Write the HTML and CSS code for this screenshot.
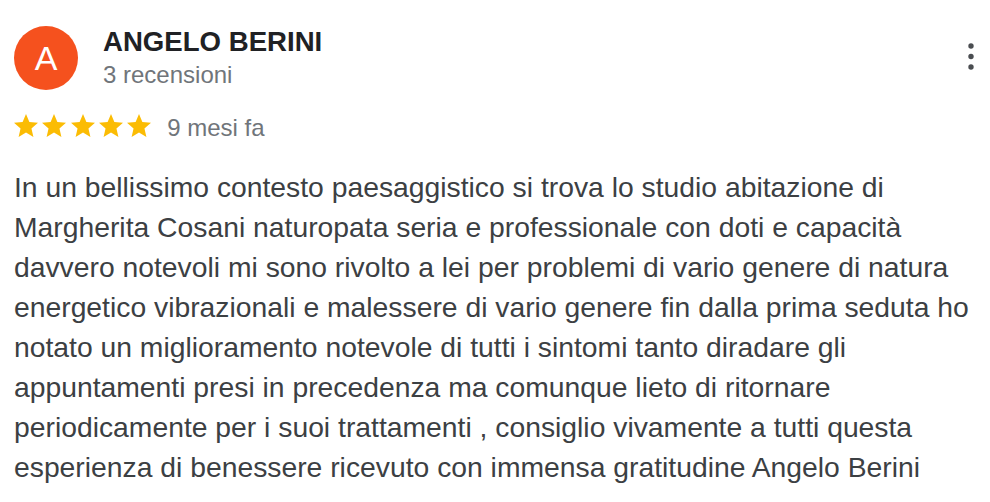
FILE: index.html
```html
<!DOCTYPE html>
<html lang="it">
<head>
<meta charset="utf-8">
<title>Recensione</title>
<link rel="stylesheet" href="styles.css">
</head>
<body>
<div class="review">
  <div class="header">
    <div class="avatar">A</div>
    <div class="info">
      <div class="name">ANGELO BERINI</div>
      <div class="meta">3 recensioni</div>
    </div>
    <button class="menu" aria-label="Altre opzioni">
      <svg width="10" height="30" viewBox="0 0 10 30"><circle cx="5" cy="5" r="2.7"/><circle cx="5" cy="15.5" r="2.7"/><circle cx="5" cy="26" r="2.7"/></svg>
    </button>
  </div>
  <div class="rating">
    <div class="stars">
      <svg class="star" viewBox="2 2 20 19"><path d="M12 17.27L18.18 21l-1.64-7.03L22 9.24l-7.19-.61L12 2 9.19 8.63 2 9.24l5.46 4.73L5.82 21z"/></svg>
      <svg class="star" viewBox="2 2 20 19"><path d="M12 17.27L18.18 21l-1.64-7.03L22 9.24l-7.19-.61L12 2 9.19 8.63 2 9.24l5.46 4.73L5.82 21z"/></svg>
      <svg class="star" viewBox="2 2 20 19"><path d="M12 17.27L18.18 21l-1.64-7.03L22 9.24l-7.19-.61L12 2 9.19 8.63 2 9.24l5.46 4.73L5.82 21z"/></svg>
      <svg class="star" viewBox="2 2 20 19"><path d="M12 17.27L18.18 21l-1.64-7.03L22 9.24l-7.19-.61L12 2 9.19 8.63 2 9.24l5.46 4.73L5.82 21z"/></svg>
      <svg class="star" viewBox="2 2 20 19"><path d="M12 17.27L18.18 21l-1.64-7.03L22 9.24l-7.19-.61L12 2 9.19 8.63 2 9.24l5.46 4.73L5.82 21z"/></svg>
    </div>
    <span class="date">9 mesi fa</span>
  </div>
  <p class="text">In un bellissimo contesto paesaggistico si trova lo studio abitazione di Margherita Cosani naturopata seria e professionale con doti e capacità davvero notevoli mi sono rivolto a lei per problemi di vario genere di natura energetico vibrazionali e malessere di vario genere fin dalla prima seduta ho notato un miglioramento notevole di tutti i sintomi tanto diradare gli appuntamenti presi in precedenza ma comunque lieto di ritornare periodicamente per i suoi trattamenti , consiglio vivamente a tutti questa esperienza di benessere ricevuto con immensa gratitudine Angelo Berini</p>
</div>
</body>
</html>
```

FILE: styles.css
```css
html, body {
  margin: 0;
  padding: 0;
  background: #ffffff;
}

body {
  font-family: "Liberation Sans", Arial, Helvetica, sans-serif;
}

.review {
  padding: 26px 14px 0 14px;
}

.header {
  display: flex;
  align-items: flex-start;
}

.avatar {
  width: 64px;
  height: 64px;
  border-radius: 50%;
  background: #f5511e;
  color: #ffffff;
  font-size: 34px;
  line-height: 64px;
  text-align: center;
  flex: 0 0 auto;
}

.info {
  margin-left: 25px;
  flex: 1 1 auto;
}

.name {
  font-size: 27.6px;
  font-weight: bold;
  line-height: 32px;
  color: #202124;
}

.meta {
  font-size: 24px;
  line-height: 34px;
  color: #70757a;
}

.menu {
  margin: 15px 0 0 0;
  padding: 0;
  border: 0;
  background: none;
  width: 10px;
  height: 30px;
  display: flex;
}

.menu svg {
  fill: #4a4d51;
}

.rating {
  display: flex;
  align-items: flex-start;
  margin-top: 22px;
  height: 28px;
}

.stars {
  display: flex;
  gap: 4.3px;
  margin-right: 16px;
}

.star {
  width: 24px;
  height: 23px;
  fill: #fbbc04;
}

.date {
  font-size: 24px;
  line-height: 28px;
  color: #70757a;
}

.text {
  margin: 25px 0 0 0;
  font-size: 28.3px;
  line-height: 40px;
  color: #3c4043;
}
```
